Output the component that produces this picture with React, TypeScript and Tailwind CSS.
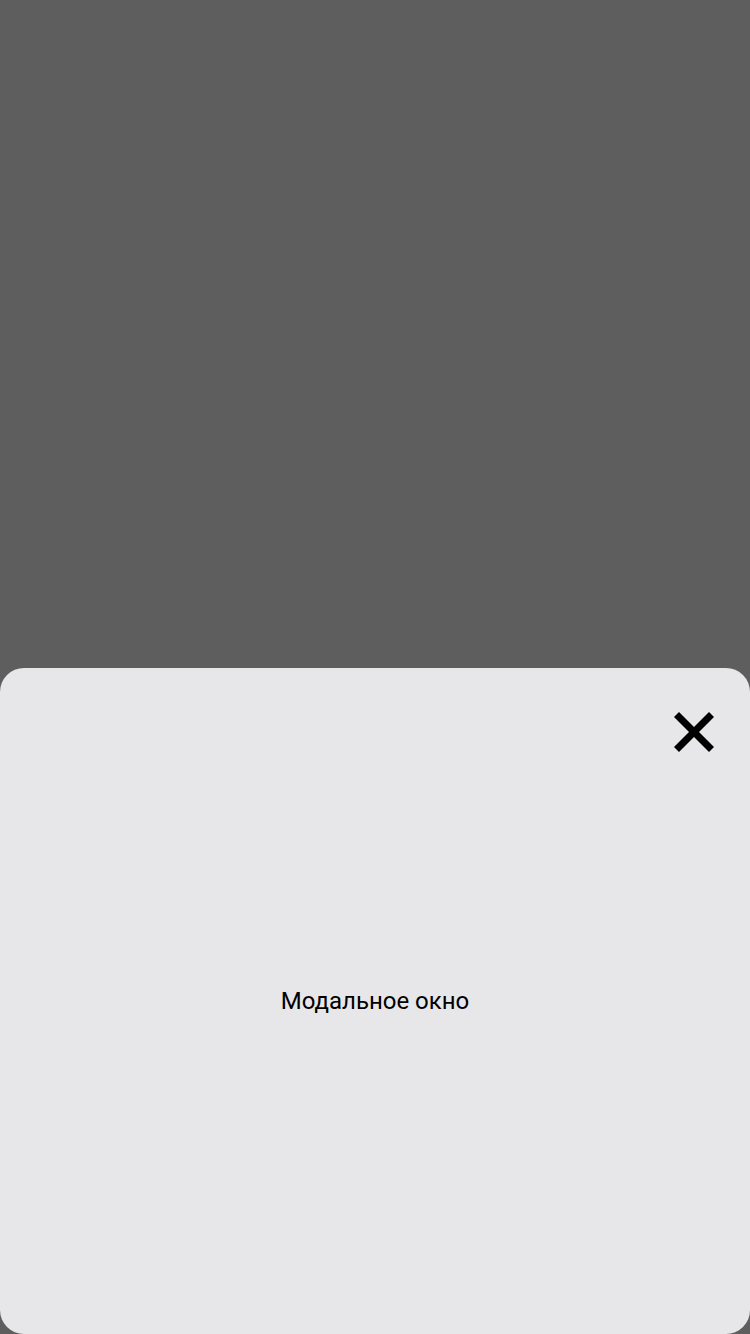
import React from "react";

export default function App() {
  return (
    <div className="w-[750px] h-[1334px] bg-[#5e5e5e] flex flex-col justify-end" style={{ fontFamily: "Roboto, 'Noto Sans', sans-serif" }}>
      <div className="relative h-[666px] w-full bg-[#e7e7e9] rounded-[24px] flex items-center justify-center">
        <button className="absolute left-[674px] top-[44px] w-[40px] h-[40px] p-0">
          <svg width="40" height="40" viewBox="0 0 40 40">
            <line x1="2.5" y1="2.5" x2="37.5" y2="37.5" stroke="#000" strokeWidth="7" />
            <line x1="37.5" y1="2.5" x2="2.5" y2="37.5" stroke="#000" strokeWidth="7" />
          </svg>
        </button>
        <span className="text-[24px] leading-[28px] text-black" style={{ fontFamily: "Roboto, sans-serif" }}>Модальное окно</span>
      </div>
    </div>
  );
}
